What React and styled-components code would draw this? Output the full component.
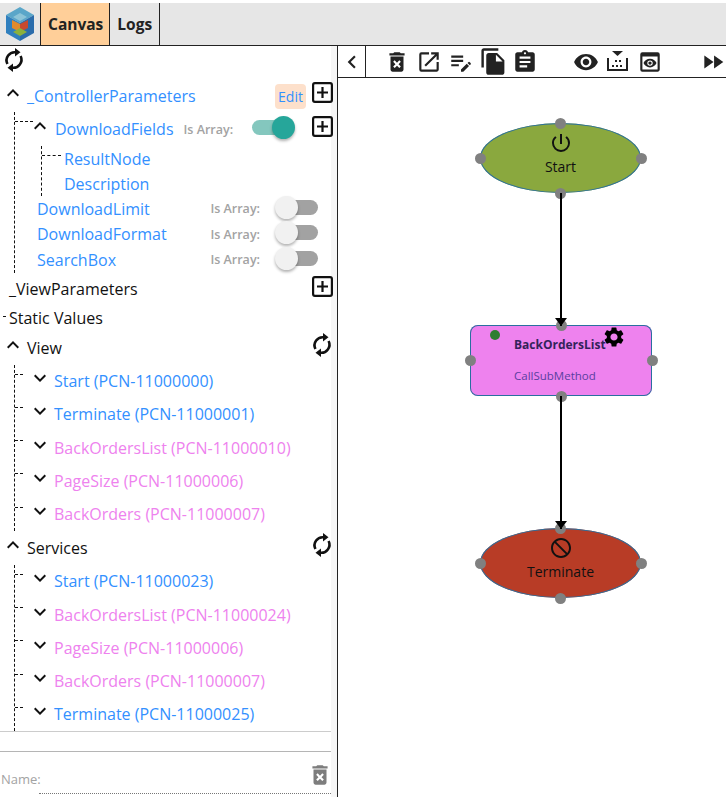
import React from "react";
import styled, { createGlobalStyle } from "styled-components";
import {
  MdExpandLess,
  MdExpandMore,
  MdDeleteForever,
  MdOpenInNew,
  MdEditNote,
  MdFileCopy,
  MdAssignment,
  MdVisibility,
  MdPreview,
  MdFastForward,
  MdChevronLeft,
  MdPowerSettingsNew,
  MdDoNotDisturb,
  MdSettings,
} from "react-icons/md";

const BLUE = "#3390ff";
const PINK = "#ee82ee";

const viewItems = [
  { name: "Start (PCN-11000000)", color: BLUE },
  { name: "Terminate (PCN-11000001)", color: BLUE },
  { name: "BackOrdersList (PCN-11000010)", color: PINK },
  { name: "PageSize (PCN-11000006)", color: PINK },
  { name: "BackOrders (PCN-11000007)", color: PINK },
];

const serviceItems = [
  { name: "Start (PCN-11000023)", color: BLUE },
  { name: "BackOrdersList (PCN-11000024)", color: PINK },
  { name: "PageSize (PCN-11000006)", color: PINK },
  { name: "BackOrders (PCN-11000007)", color: PINK },
  { name: "Terminate (PCN-11000025)", color: BLUE },
];

const Logo = () => (
  <svg width="32" height="36" viewBox="0 0 32 36">
    <polygon points="16,1 30,9 16,17 2,9" fill="#5aa6c9" />
    <polygon points="2,9 16,17 16,35 2,27" fill="#2f7fbe" />
    <polygon points="30,9 16,17 16,35 30,27" fill="#2a6cab" />
    <polygon points="16,7 23,11 16,15 9,11" fill="#8cc4d8" />
    <polygon points="8,14 16,18 16,26 8,22" fill="#e08a2c" />
    <polygon points="24,14 16,18 16,26 24,22" fill="#c8492f" />
    <polygon points="16,22 23,26 16,30 9,26" fill="#8bb13c" />
  </svg>
);

const DropIcon = () => (
  <DropSvg width="22" height="22" viewBox="0 0 22 22" fill="#222">
    <polygon points="5,0 16,0 10.5,5" />
    <path d="M0 7h2v11h17V7h2v13H0z" />
    <path d="M8 9h2v2H8zM12 9h2v2h-2zM5 14h2v2H5zM9 14h2v2H9zM13 14h2v2h-2z" />
  </DropSvg>
);

const SyncGlyph = () => (
  <svg width="24" height="24" viewBox="0 0 24 24">
    <g fill="none" stroke="#111" strokeWidth="2.6">
      <path d="M14 4.3A8.2 8.2 0 0 0 5.4 16" />
      <path d="M10 19.7A8.2 8.2 0 0 0 18.6 8" />
    </g>
    <polygon points="13,0 18.5,4.3 13,8.6" fill="#111" />
    <polygon points="11,15.4 5.5,19.7 11,24" fill="#111" />
  </svg>
);

const PlusBox = () => (
  <svg width="21" height="21" viewBox="0 0 21 21">
    <rect x="1.1" y="1.1" width="18.8" height="18.8" rx="1.8" fill="none" stroke="#111" strokeWidth="2.2" />
    <path d="M10.5 5v11M5 10.5h11" stroke="#111" strokeWidth="2.2" />
  </svg>
);

const Toggle = ({ on }) => (
  <Track $on={on}>
    <Thumb $on={on} />
  </Track>
);

const TreeItem = ({ item }) => (
  <Row $h={33.25}>
    <Tick $w={8} />
    <Chevron $ml={5}>
      <MdExpandMore size={24} />
    </Chevron>
    <Label $color={item.color} $ml={2}>
      {item.name}
    </Label>
  </Row>
);

const FieldRow = ({ name }) => (
  <FieldLine>
    <Label $color={BLUE} $ml={22}>
      {name}
    </Label>
    <ArrayLabel $auto>Is Array:</ArrayLabel>
    <Toggle />
  </FieldLine>
);

const Handles = () => (
  <>
    <Handle $x="50%" $y="0%" />
    <Handle $x="0%" $y="50%" />
    <Handle $x="100%" $y="50%" />
    <Handle $x="50%" $y="100%" />
  </>
);

const App = () => {
  return (
    <Page>
      <GlobalStyle />
      <TopBar>
        <LogoBox>
          <Logo />
        </LogoBox>
        <Tab $active $right={6}>
          Canvas
        </Tab>
        <Tab $right={7}>Logs</Tab>
      </TopBar>
      <Main>
        <Side>
          <Tree>
            <Row $h={34}>
              <SyncIcon $ml={2} $top={-6}>
                <SyncGlyph />
              </SyncIcon>
            </Row>
            <Row $h={32}>
              <Chevron $ml={1}>
                <MdExpandLess size={24} />
              </Chevron>
              <Label $color={BLUE} $ml={2}>
                _ControllerParameters
              </Label>
              <EditButton>Edit</EditButton>
              <PlusIcon $top={-7} $ml={6}>
                <PlusBox />
              </PlusIcon>
            </Row>
            <Branch $lead={4}>
              <Row $h={34}>
                <Tick $w={18} $top={9} />
                <Chevron $ml={-5}>
                  <MdExpandLess size={24} />
                </Chevron>
                <Label $color={BLUE} $ml={3}>
                  DownloadFields
                </Label>
                <ArrayLabel $ml={10}>Is Array:</ArrayLabel>
                <Toggle on />
                <PlusIcon $top={-5} $auto>
                  <PlusBox />
                </PlusIcon>
              </Row>
              <SubBranch>
                <Row $h={25}>
                  <Tick $w={19} $top={9} />
                  <Label $color={BLUE} $ml={3}>
                    ResultNode
                  </Label>
                </Row>
                <Row $h={25}>
                  <Label $color={BLUE} $ml={22}>
                    Description
                  </Label>
                </Row>
              </SubBranch>
              <FieldRow name="DownloadLimit" />
              <FieldRow name="DownloadFormat" />
              <FieldRow name="SearchBox" />
            </Branch>
            <Row $h={33}>
              <Label $ml={9}>_ViewParameters</Label>
              <PlusIcon $top={-6} $auto>
                <PlusBox />
              </PlusIcon>
            </Row>
            <Row $h={25}>
              <Tick $w={3} $ml={3} $top={10} />
              <Label $ml={3}>Static Values</Label>
            </Row>
            <Row $h={34}>
              <Chevron $ml={1}>
                <MdExpandLess size={24} />
              </Chevron>
              <Label $ml={2}>View</Label>
              <SyncIcon $auto $top={-5}>
                <SyncGlyph />
              </SyncIcon>
            </Row>
            <Branch $lead={2} $trail={24}>
              {viewItems.map((item) => (
                <TreeItem key={item.name} item={item} />
              ))}
            </Branch>
            <Row $h={34}>
              <Chevron $ml={1}>
                <MdExpandLess size={24} />
              </Chevron>
              <Label $ml={2}>Services</Label>
              <SyncIcon $auto $top={-5}>
                <SyncGlyph />
              </SyncIcon>
            </Row>
            <Branch $lead={2} $trail={24}>
              {serviceItems.map((item) => (
                <TreeItem key={item.name} item={item} />
              ))}
            </Branch>
          </Tree>
          <Footer>
            <NameLabel>Name:</NameLabel>
            <NameInput />
            <FooterTrash>
              <MdDeleteForever size={26} />
            </FooterTrash>
          </Footer>
          <ScrollTrack />
        </Side>
        <Right>
          <Toolbar>
            <BackButton>
              <MdChevronLeft size={26} />
            </BackButton>
            <Tools>
              <MdDeleteForever size={26} />
              <MdOpenInNew size={26} />
              <MdEditNote size={26} />
              <CopyIcon size={29} />
              <MdAssignment size={26} />
              <ToolGap />
              <MdVisibility size={26} />
              <DropIcon />
              <MdPreview size={26} />
              <ForwardIcon>
                <MdFastForward size={26} />
              </ForwardIcon>
            </Tools>
          </Toolbar>
          <Canvas>
            <Ellipse $top={45} $color="#8aa83e">
              <Handles />
              <NodeIcon>
                <MdPowerSettingsNew size={24} />
              </NodeIcon>
              <NodeText>Start</NodeText>
            </Ellipse>
            <Method>
              <Handles />
              <StatusDot />
              <Gear>
                <MdSettings size={24} />
              </Gear>
              <MethodTitle>BackOrdersList</MethodTitle>
              <MethodType>CallSubMethod</MethodType>
            </Method>
            <Ellipse $top={450} $color="#b83c26">
              <Handles />
              <NodeIcon>
                <MdDoNotDisturb size={24} />
              </NodeIcon>
              <NodeText>Terminate</NodeText>
            </Ellipse>
            <Edge $top={115} $h={133} />
            <Edge $top={318} $h={133} />
          </Canvas>
        </Right>
      </Main>
    </Page>
  );
};

export default App;

const GlobalStyle = createGlobalStyle`
  html, body {
    margin: 0;
    padding: 0;
    background: #fff;
  }
  body {
    font-family: "Open Sans", "Noto Sans", sans-serif;
  }
`;

const Page = styled.div`
  width: 726px;
  height: 797px;
  display: flex;
  flex-direction: column;
  overflow: hidden;
  background: #fff;
`;

const TopBar = styled.div`
  height: 42px;
  margin-top: 3px;
  display: flex;
  flex: none;
  background: #e6e6e6;
  border-bottom: 1px solid #222;
`;

const LogoBox = styled.div`
  width: 40px;
  display: flex;
  align-items: center;
  justify-content: center;
`;

const Tab = styled.div`
  padding: 0 ${(p) => p.$right}px 0 7px;
  display: flex;
  align-items: center;
  border-left: 1px solid #222;
  border-right: ${(p) => (p.$active ? "none" : "1px solid #222")};
  background: ${(p) => (p.$active ? "#ffcf99" : "transparent")};
  font-size: 15.5px;
  font-weight: 700;
  color: #222;
`;

const Main = styled.div`
  flex: 1;
  display: flex;
  min-height: 0;
`;

const Side = styled.div`
  position: relative;
  width: 337px;
  flex: none;
  display: flex;
  flex-direction: column;
  border-right: 1px solid #222;
`;

const ScrollTrack = styled.div`
  position: absolute;
  top: 0;
  right: 0;
  bottom: 0;
  width: 6px;
  background: #f6f6f6;
`;

const Tree = styled.div`
  height: 686px;
  flex: none;
  padding-right: 4px;
  border-bottom: 1px solid #ccc;
  box-sizing: border-box;
`;

const Row = styled.div`
  position: relative;
  z-index: 1;
  height: ${(p) => p.$h}px;
  display: flex;
  align-items: center;
`;

const FieldLine = styled(Row)`
  height: 25.5px;
`;

const Branch = styled.div`
  margin: ${(p) => p.$lead || 0}px 0 ${(p) => p.$trail || 0}px 14px;
  border-left: 1px dashed #111;
  & > :first-child {
    margin-top: -${(p) => p.$lead || 0}px;
  }
  & > :last-child {
    margin-bottom: -${(p) => p.$trail || 0}px;
  }
`;

const SubBranch = styled.div`
  margin-left: 26px;
  border-left: 1px dashed #111;
`;

const Tick = styled.span`
  flex: none;
  align-self: flex-start;
  width: ${(p) => p.$w}px;
  margin-left: ${(p) => p.$ml || 0}px;
  margin-top: ${(p) => p.$top ?? 9}px;
  border-top: 1px dashed #111;
`;

const Chevron = styled.span`
  display: flex;
  flex: none;
  margin-left: ${(p) => p.$ml || 0}px;
  margin-top: -6px;
  color: #111;
`;

const Label = styled.span`
  margin-left: ${(p) => p.$ml || 0}px;
  font-size: 16px;
  color: ${(p) => p.$color || "#111"};
  white-space: nowrap;
`;

const ArrayLabel = styled.span`
  margin-left: ${(p) => (p.$auto ? "auto" : `${p.$ml || 0}px`)};
  font-size: 12.5px;
  font-weight: 600;
  color: #a3a3a3;
  white-space: nowrap;
`;

const Track = styled.span`
  position: relative;
  flex: none;
  width: 36px;
  height: 15px;
  margin-left: ${(p) => (p.$on ? 19 : 22)}px;
  margin-right: ${(p) => (p.$on ? 0 : 15)}px;
  margin-top: ${(p) => (p.$on ? -4 : -3)}px;
  border-radius: 8px;
  background: ${(p) => (p.$on ? "#84c7be" : "#a2a2a2")};
`;

const Thumb = styled.span`
  position: absolute;
  top: -4px;
  left: ${(p) => (p.$on ? 20 : -7)}px;
  width: 23px;
  height: 23px;
  border-radius: 50%;
  background: ${(p) => (p.$on ? "#26a69a" : "#f1f1f1")};
  box-shadow: 0 2px 3px rgba(0, 0, 0, 0.3);
`;

const EditButton = styled.span`
  margin-left: auto;
  width: 31px;
  height: 25px;
  display: flex;
  align-items: center;
  justify-content: center;
  border-radius: 4px;
  background: #fde0cb;
  color: ${BLUE};
  font-size: 14px;
`;

const PlusIcon = styled.span`
  display: flex;
  margin-left: ${(p) => (p.$auto ? "auto" : `${p.$ml || 0}px`)};
  margin-top: ${(p) => p.$top || 0}px;
`;

const SyncIcon = styled.span`
  display: flex;
  margin-left: ${(p) => (p.$auto ? "auto" : `${p.$ml || 0}px`)};
  margin-right: ${(p) => (p.$auto ? -1 : 0)}px;
  margin-top: ${(p) => p.$top || 0}px;
`;

const Footer = styled.div`
  position: relative;
  margin-top: 19px;
  height: 45px;
  border-top: 1px solid #b5b5b5;
`;

const NameLabel = styled.span`
  position: absolute;
  left: 1px;
  top: 18px;
  font-size: 13px;
  color: #a3a3a3;
`;

const NameInput = styled.div`
  position: absolute;
  left: 39px;
  right: 6px;
  top: 41px;
  border-top: 1px dotted #777;
`;

const FooterTrash = styled.span`
  position: absolute;
  right: 4px;
  top: 10px;
  display: flex;
  color: #7d7d7d;
`;

const Right = styled.div`
  flex: 1;
  min-width: 0;
  display: flex;
  flex-direction: column;
`;

const Toolbar = styled.div`
  height: 31px;
  flex: none;
  display: flex;
  border-bottom: 1px solid #222;
`;

const BackButton = styled.span`
  width: 27px;
  display: flex;
  align-items: center;
  justify-content: center;
  border-right: 1px solid #222;
  color: #222;
`;

const Tools = styled.div`
  flex: 1;
  padding-left: 18px;
  display: flex;
  align-items: center;
  gap: 6px;
  color: #222;
`;

const CopyIcon = styled(MdFileCopy)`
  margin: 0 -1.5px;
`;

const DropSvg = styled.svg`
  margin: 0 2px;
`;

const ToolGap = styled.span`
  width: 23px;
`;

const ForwardIcon = styled.span`
  display: flex;
  margin-left: auto;
`;

const Canvas = styled.div`
  position: relative;
  flex: 1;
`;

const Edge = styled.div`
  position: absolute;
  z-index: 2;
  left: 222px;
  top: ${(p) => p.$top}px;
  width: 2px;
  height: ${(p) => p.$h}px;
  background: #000;
  &::after {
    content: "";
    position: absolute;
    left: -5px;
    bottom: 0;
    border-left: 6px solid transparent;
    border-right: 6px solid transparent;
    border-top: 8px solid #000;
  }
`;

const Ellipse = styled.div`
  position: absolute;
  left: 142px;
  top: ${(p) => p.$top}px;
  width: 161px;
  height: 70px;
  box-shadow: inset 0 0 0 1px #2a6f9f;
  border-radius: 50%;
  background: ${(p) => p.$color};
  display: flex;
  flex-direction: column;
  align-items: center;
  color: #111;
`;

const Handle = styled.span`
  position: absolute;
  left: ${(p) => p.$x};
  top: ${(p) => p.$y};
  width: 11px;
  height: 11px;
  margin: -5.5px 0 0 -5.5px;
  border-radius: 50%;
  background: #808080;
`;

const NodeIcon = styled.span`
  display: flex;
  margin-top: 8px;
`;

const NodeText = styled.span`
  margin-top: 2px;
  font-size: 14px;
`;

const Method = styled.div`
  position: absolute;
  left: 132px;
  top: 247px;
  width: 182px;
  height: 71px;
  box-shadow: inset 0 0 0 1px #2a6f9f;
  border-radius: 8px;
  background: ${PINK};
`;

const StatusDot = styled.span`
  position: absolute;
  left: 20px;
  top: 5px;
  width: 10px;
  height: 10px;
  border-radius: 50%;
  background: #2e7d32;
`;

const Gear = styled.span`
  position: absolute;
  left: 132px;
  top: 0;
  display: flex;
  color: #000;
`;

const MethodTitle = styled.div`
  position: absolute;
  left: 44px;
  top: 11px;
  font-size: 12px;
  font-weight: 700;
  color: #33225a;
`;

const MethodType = styled.div`
  position: absolute;
  left: 44px;
  top: 43px;
  font-size: 11.5px;
  color: #5a3fa0;
`;
